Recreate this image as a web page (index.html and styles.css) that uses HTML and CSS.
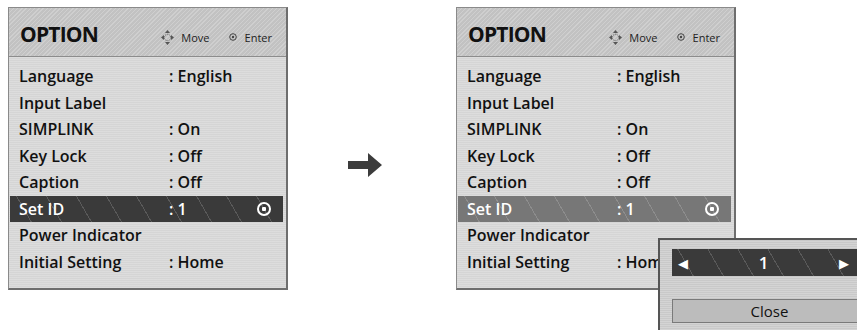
FILE: index.html
```html
<!DOCTYPE html>
<html lang="en">
<head>
  <meta charset="UTF-8" />
  <title>Option - Set ID</title>
  <link rel="stylesheet" href="styles.css">
</head>
<body>

<div class="stage">

  <div class="panel">
    <div class="panel-head">
      <span class="title">OPTION</span>
      <span class="hint">
        <svg class="ico-move" width="13" height="15" viewBox="0 0 13 15">
          <polygon points="6.5,0 9,3 4,3" />
          <polygon points="6.5,15 9,12 4,12" />
          <polygon points="0,7.5 3,5 3,10" />
          <polygon points="13,7.5 10,5 10,10" />
          <circle cx="6.5" cy="7.5" r="3.2" fill="none" stroke="#555" stroke-width="1" stroke-dasharray="1 1" />
        </svg>
        <span class="hint-text">Move</span>
        <svg class="ico-enter" width="8" height="8" viewBox="0 0 8 8">
          <circle cx="4" cy="4" r="3.3" fill="none" stroke="#444" stroke-width="1" />
          <circle cx="4" cy="4" r="1.2" fill="#444" />
        </svg>
        <span class="hint-text">Enter</span>
      </span>
    </div>
    <div class="rows">
      <div class="row"><span class="label">Language</span><span class="value">: English</span></div>
      <div class="row"><span class="label">Input Label</span></div>
      <div class="row"><span class="label">SIMPLINK</span><span class="value">: On</span></div>
      <div class="row"><span class="label">Key Lock</span><span class="value">: Off</span></div>
      <div class="row"><span class="label">Caption</span><span class="value">: Off</span></div>
      <div class="row active"><span class="label">Set ID</span><span class="value">: 1</span><span class="sel"></span></div>
      <div class="row"><span class="label">Power Indicator</span></div>
      <div class="row"><span class="label">Initial Setting</span><span class="value">: Home</span></div>
    </div>
  </div>

  <div class="arrow">
    <svg width="34" height="24" viewBox="0 0 34 24">
      <polygon points="0,8 20,8 20,0 34,12 20,24 20,16 0,16" fill="#3c3c3c" />
    </svg>
  </div>

  <div class="panel">
    <div class="panel-head">
      <span class="title">OPTION</span>
      <span class="hint">
        <svg class="ico-move" width="13" height="15" viewBox="0 0 13 15">
          <polygon points="6.5,0 9,3 4,3" />
          <polygon points="6.5,15 9,12 4,12" />
          <polygon points="0,7.5 3,5 3,10" />
          <polygon points="13,7.5 10,5 10,10" />
          <circle cx="6.5" cy="7.5" r="3.2" fill="none" stroke="#555" stroke-width="1" stroke-dasharray="1 1" />
        </svg>
        <span class="hint-text">Move</span>
        <svg class="ico-enter" width="8" height="8" viewBox="0 0 8 8">
          <circle cx="4" cy="4" r="3.3" fill="none" stroke="#444" stroke-width="1" />
          <circle cx="4" cy="4" r="1.2" fill="#444" />
        </svg>
        <span class="hint-text">Enter</span>
      </span>
    </div>
    <div class="rows">
      <div class="row"><span class="label">Language</span><span class="value">: English</span></div>
      <div class="row"><span class="label">Input Label</span></div>
      <div class="row"><span class="label">SIMPLINK</span><span class="value">: On</span></div>
      <div class="row"><span class="label">Key Lock</span><span class="value">: Off</span></div>
      <div class="row"><span class="label">Caption</span><span class="value">: Off</span></div>
      <div class="row active dim"><span class="label">Set ID</span><span class="value">: 1</span><span class="sel"></span></div>
      <div class="row"><span class="label">Power Indicator</span></div>
      <div class="row"><span class="label">Initial Setting</span><span class="value">: Home</span></div>
    </div>
  </div>

  <div class="popup">
    <div class="spin">
      <span class="tri">&#9664;</span>
      <span class="num">1</span>
      <span class="tri">&#9654;</span>
    </div>
    <div class="close">Close</div>
  </div>

</div>

</body>
</html>
```

FILE: styles.css
```css
html, body {
  margin: 0;
  padding: 0;
  background: #fff;
}
body {
  width: 857px;
  height: 330px;
  overflow: hidden;
  font-family: "Open Sans", "DejaVu Sans", sans-serif;
  color: #111;
}
.stage {
  position: relative;
  display: flex;
  align-items: flex-start;
  padding: 7px 0 0 8px;
  height: 323px;
  box-sizing: border-box;
}
.panel {
  width: 280px;
  height: 283px;
  box-sizing: border-box;
  border: 1px solid #8a8a8a;
  border-right: 2px solid #6e6e6e;
  border-bottom: 2px solid #6e6e6e;
  background: #d5d5d5;
  background-image: repeating-linear-gradient(0deg, rgba(255,255,255,0.18) 0 1px, transparent 1px 2px);
}
.panel-head {
  height: 49px;
  display: flex;
  align-items: center;
  justify-content: space-between;
  padding: 4px 14px 0 11px;
  box-sizing: border-box;
  background: #c2c2c2;
  background-image: repeating-linear-gradient(135deg, rgba(255,255,255,0.22) 0 1px, transparent 1px 3px);
  border-bottom: 1px solid #8c8c8c;
}
.title {
  font-size: 21px;
  font-weight: 700;
  letter-spacing: -0.8px;
}
.hint {
  display: flex;
  align-items: center;
  font-size: 11px;
  color: #222;
  padding-top: 6px;
}
.ico-move { margin-right: 7px; }
.ico-move polygon { fill: #555; }
.ico-enter { margin-left: 19px; margin-right: 8px; }
.rows {
  padding-top: 6px;
}
.row {
  height: 26.5px;
  display: flex;
  align-items: center;
  font-size: 16px;
  font-weight: 600;
  padding-left: 9px;
  box-sizing: border-box;
  margin: 0 3px 0 1px;
}
.label {
  width: 150px;
}
.value {
  flex: 1;
}
.row.active {
  color: #fff;
  background: #3a3a3a;
  background-image: repeating-linear-gradient(60deg, transparent 0 18px, rgba(255,255,255,0.16) 18px 19px, transparent 19px 26px);
}
.row.active.dim {
  background-color: #777;
}
.sel {
  width: 10px;
  height: 10px;
  border: 2px solid #fff;
  border-radius: 50%;
  margin-right: 12px;
  background: radial-gradient(circle, #fff 0 2px, transparent 2.5px);
}
.arrow {
  width: 168px;
  display: flex;
  padding: 146px 0 0 60px;
  box-sizing: border-box;
}
.popup {
  position: absolute;
  left: 658px;
  top: 238px;
  width: 220px;
  height: 110px;
  box-sizing: border-box;
  border: 2px solid #555;
  background: #c9c9c9;
  background-image: repeating-linear-gradient(0deg, rgba(255,255,255,0.2) 0 1px, transparent 1px 2px);
  padding: 9px 0 0 12px;
}
.spin {
  height: 27px;
  display: flex;
  align-items: center;
  justify-content: space-between;
  background: #3a3a3a;
  background-image: repeating-linear-gradient(60deg, transparent 0 18px, rgba(255,255,255,0.16) 18px 19px, transparent 19px 26px);
  color: #fff;
  font-weight: 600;
  font-size: 17px;
  padding: 0 8px 0 6px;
  width: 185px;
  box-sizing: border-box;
}
.tri {
  font-size: 13px;
}
.close {
  margin-top: 23px;
  width: 195px;
  height: 24px;
  box-sizing: border-box;
  border: 1px solid #7a7a7a;
  background: #bcbcbc;
  display: flex;
  align-items: center;
  justify-content: center;
  font-size: 15px;
  font-weight: 500;
}
```
